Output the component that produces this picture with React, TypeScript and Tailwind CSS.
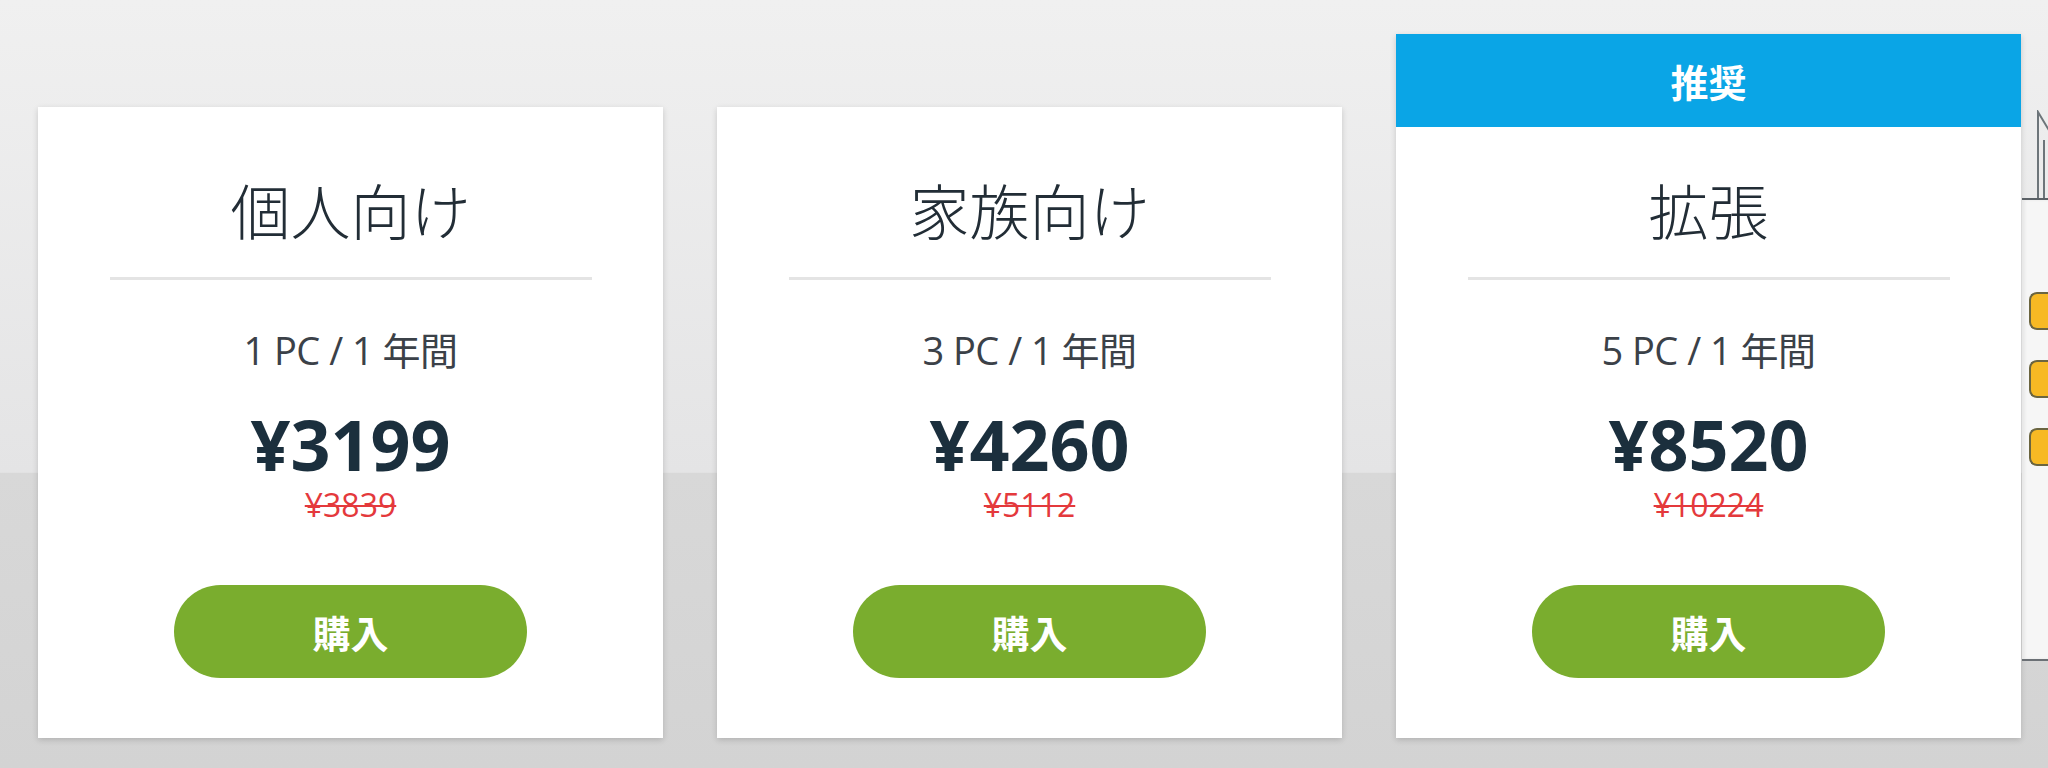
import { type ReactNode } from 'react'

type Plan = {
  name: string
  devices: string
  price: string
  oldPrice: string
  recommended?: boolean
}

const PLANS: Plan[] = [
  { name: '個人向け', devices: '1 PC / 1 年間', price: '¥3199', oldPrice: '¥3839' },
  { name: '家族向け', devices: '3 PC / 1 年間', price: '¥4260', oldPrice: '¥5112' },
  { name: '拡張', devices: '5 PC / 1 年間', price: '¥8520', oldPrice: '¥10224', recommended: true },
]

const FONT = "font-['Open_Sans','Noto_Sans_CJK_JP',sans-serif]"

function PlanBody({ plan, top }: { plan: Plan; top: string }) {
  return (
    <div className={`flex flex-col items-center ${top}`}>
      <h2 className="h-[72px] text-[60px] leading-[72px] font-light text-[#222d36] font-['Noto_Sans_CJK_JP',sans-serif]">
        {plan.name}
      </h2>
      {/* divider */}
      <div className="mt-[32px] h-[3px] w-[482px] bg-[#e4e4e4]" />
      <p className="mt-[46px] h-[48px] text-[38px] leading-[48px] tracking-[-0.5px] text-[#3b4148]">{plan.devices}</p>
      <p className="mt-[34px] h-[72px] text-[70px] leading-[72px] font-bold text-[#1b2f3d]">{plan.price}</p>
      <p className="mt-[8px] h-[34px] text-[32px] leading-[34px] text-[#e4393c] line-through decoration-2">
        {plan.oldPrice}
      </p>
      <button className="mt-[63px] flex h-[93px] w-[353px] items-center justify-center rounded-full bg-[#7aad2e] text-[38px] font-bold text-white font-['Noto_Sans_CJK_JP',sans-serif]">
        購入
      </button>
    </div>
  )
}

function Card({ plan }: { plan: Plan }): ReactNode {
  if (plan.recommended) {
    return (
      <div className="flex h-[704px] w-[625px] shrink-0 flex-col bg-white shadow-[0_2px_6px_rgba(0,0,0,0.16)]">
        <div className="flex h-[93px] items-center justify-center bg-[#0aa5e6] text-[38px] font-bold text-white font-['Noto_Sans_CJK_JP',sans-serif]">
          推奨
        </div>
        <PlanBody plan={plan} top="pt-[46px]" />
      </div>
    )
  }
  return (
    <div className="h-[631px] w-[625px] shrink-0 bg-white shadow-[0_2px_6px_rgba(0,0,0,0.16)]">
      <PlanBody plan={plan} top="pt-[66px]" />
    </div>
  )
}

// cut-off illustration at the right edge
function SideArt() {
  return (
    <div className="ml-px flex w-[28px] shrink-0 flex-col self-start pt-[110px]">
      <svg width="28" height="88" viewBox="0 0 28 88" fill="none" stroke="#6d757a" strokeWidth="2">
        <path d="M16 88 V2 L28 22" />
        <path d="M22 88 V30" />
      </svg>
      <div className="h-[2px] bg-[#5b6166]" />
      <div className="flex h-[459px] flex-col gap-[30px] bg-[#f6f6f6] pl-[7px] pt-[92px] shadow-[inset_3px_0_3px_rgba(0,0,0,0.06)]">
        <div className="h-[38px] rounded-l-[8px] border-2 border-r-0 border-[#6b6540] bg-[#f7b924]" />
        <div className="h-[38px] rounded-l-[8px] border-2 border-r-0 border-[#6b6540] bg-[#f7b924]" />
        <div className="h-[38px] rounded-l-[8px] border-2 border-r-0 border-[#6b6540] bg-[#f7b924]" />
      </div>
      <div className="h-[2px] bg-[#6b7075]" />
    </div>
  )
}

export default function App() {
  return (
    <div
      className={`flex h-[768px] w-[2048px] items-end overflow-hidden bg-[linear-gradient(to_bottom,#f0f0f0_0%,#e4e4e5_61.5%,#d8d8d8_61.6%,#d3d3d3_100%)] pb-[30px] pl-[38px] ${FONT}`}
    >
      <div className="flex items-end gap-[54px]">
        {PLANS.map(p => (
          <Card key={p.name} plan={p} />
        ))}
      </div>
      <SideArt />
    </div>
  )
}
